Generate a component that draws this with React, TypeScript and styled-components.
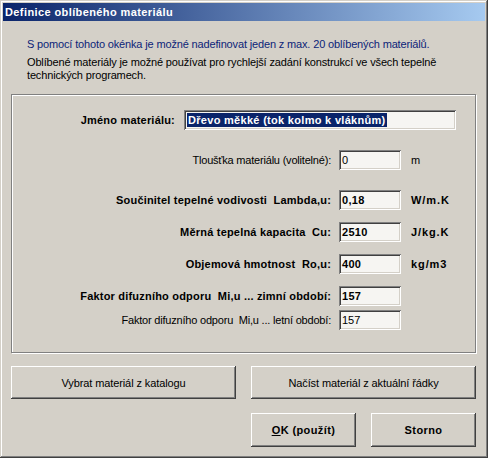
import React from "react";
import styled, { createGlobalStyle } from "styled-components";

const Global = createGlobalStyle`
  html, body { margin: 0; padding: 0; background: #d4d0c8; }
  body { font-family: "Liberation Sans", Arial, sans-serif; font-size: 11px; color: #000; letter-spacing: -0.15px; }
`;

const Window = styled.div`
  width: 488px;
  height: 458px;
  box-sizing: border-box;
  padding: 3px;
  background: #d4d0c8;
  box-shadow: inset -1px -1px #404040, inset 1px 1px #d4d0c8, inset -2px -2px #808080, inset 2px 2px #ffffff;
  display: flex;
  flex-direction: column;
`;

const TitleBar = styled.div`
  height: 18px;
  background: linear-gradient(90deg, #0a246a, #a6caf0);
  color: #fff;
  font-weight: bold;
  font-size: 11px;
  letter-spacing: 0.4px;
  line-height: 18px;
  padding-left: 2px;
  white-space: nowrap;
`;

const Body = styled.div`
  padding: 17px 9px 0 8px;
  display: flex;
  flex-direction: column;
`;

const Intro = styled.div`
  padding-left: 16px;
`;

const IntroLine = styled.p<{ $accent?: boolean; $gap?: number }>`
  margin: 0;
  margin-top: ${(p) => p.$gap ?? 0}px;
  line-height: 13px;
  color: ${(p) => (p.$accent ? "#0c2478" : "#000")};
`;

const GroupBox = styled.div`
  margin-top: 12px;
  height: 259px;
  box-sizing: border-box;
  border: 1px solid #808080;
  box-shadow: inset 1px 1px #ffffff, 1px 1px #ffffff;
  padding-top: 15px;
  display: flex;
  flex-direction: column;
`;

const NameRow = styled.div`
  display: flex;
  align-items: center;
  height: 20px;
`;

const NameLabel = styled.div`
  width: 163px;
  text-align: right;
  font-weight: bold;
  letter-spacing: 0.2px;
  white-space: pre;
  margin-right: 9px;
`;

const FieldRow = styled.div<{ $gap: number }>`
  display: grid;
  grid-template-columns: 319px 62px 1fr;
  column-gap: 8px;
  align-items: center;
  height: 20px;
  margin-top: ${(p) => p.$gap}px;
`;

const Label = styled.div<{ $bold?: boolean }>`
  text-align: right;
  white-space: pre;
  font-weight: ${(p) => (p.$bold ? "bold" : "normal")};
  letter-spacing: ${(p) => (p.$bold ? "0.2px" : "-0.2px")};
`;

const Field = styled.div<{ $bold?: boolean; $width?: number }>`
  box-sizing: border-box;
  height: 20px;
  width: ${(p) => (p.$width ? `${p.$width}px` : "auto")};
  background: #f6f5f2;
  box-shadow: inset 1px 1px #808080, inset -1px -1px #ffffff, inset 2px 2px #404040, inset -2px -2px #d4d0c8;
  padding-left: 3px;
  line-height: 20px;
  font-weight: ${(p) => (p.$bold ? "bold" : "normal")};
  letter-spacing: ${(p) => (p.$bold ? "0.3px" : "0")};
  white-space: nowrap;
  overflow: hidden;
`;

const Selected = styled.span`
  background: #0a246a;
  color: #fff;
  padding: 1px 1px;
`;

const Unit = styled.div<{ $bold?: boolean }>`
  padding-left: 2px;
  font-weight: ${(p) => (p.$bold ? "bold" : "normal")};
  letter-spacing: ${(p) => (p.$bold ? "0.9px" : "0")};
`;

const ButtonRow = styled.div`
  margin-top: 13px;
  display: grid;
  grid-template-columns: 225px 225px;
  column-gap: 15px;
`;

const ActionRow = styled.div`
  margin-top: 14px;
  display: flex;
  justify-content: flex-end;
  gap: 15px;
`;

const Button = styled.button<{ $bold?: boolean; $h: number; $w?: number }>`
  font-family: "Liberation Sans", Arial, sans-serif;
  font-size: 11px;
  font-weight: ${(p) => (p.$bold ? "bold" : "normal")};
  letter-spacing: ${(p) => (p.$bold ? "0.4px" : "-0.1px")};
  color: #000;
  height: ${(p) => p.$h}px;
  width: ${(p) => (p.$w ? `${p.$w}px` : "auto")};
  background: #d4d0c8;
  border: none;
  padding: 0;
  box-shadow: inset -1px -1px #404040, inset 1px 1px #ffffff, inset -2px -2px #808080, inset 2px 2px #d4d0c8;
  white-space: pre;
`;

const fields = [
  { label: "Tloušťka materiálu (volitelné):", value: "0", unit: "m", bold: false, gap: 20 },
  { label: "Součinitel tepelné vodivosti  Lambda,u:", value: "0,18", unit: "W/m.K", bold: true, gap: 20 },
  { label: "Měrná tepelná kapacita  Cu:", value: "2510", unit: "J/kg.K", bold: true, gap: 12 },
  { label: "Objemová hmotnost  Ro,u:", value: "400", unit: "kg/m3", bold: true, gap: 12 },
  { label: "Faktor difuzního odporu  Mi,u ... zimní období:", value: "157", unit: "", bold: true, gap: 12 },
  { label: "Faktor difuzního odporu  Mi,u ... letní období:", value: "157", unit: "", bold: false, gap: 4 },
];

export default function App() {
  return (
    <>
      <Global />
      <Window>
        <TitleBar>Definice oblíbeného materiálu</TitleBar>
        <Body>
          <Intro>
            <IntroLine $accent>S pomocí tohoto okénka je možné nadefinovat jeden z max. 20 oblíbených materiálů.</IntroLine>
            <IntroLine $gap={5}>
              Oblíbené materiály je možné používat pro rychlejší zadání konstrukcí ve všech tepelně
            </IntroLine>
            <IntroLine>technických programech.</IntroLine>
          </Intro>
          <GroupBox>
            <NameRow>
              <NameLabel>Jméno materiálu:</NameLabel>
              <Field $bold $width={272}>
                <Selected>Dřevo měkké (tok kolmo k vláknům)</Selected>
              </Field>
            </NameRow>
            {fields.map((f) => (
              <FieldRow key={f.label} $gap={f.gap}>
                <Label $bold={f.bold}>{f.label}</Label>
                <Field $bold={f.bold}>{f.value}</Field>
                <Unit $bold={f.unit !== "m"}>{f.unit}</Unit>
              </FieldRow>
            ))}
          </GroupBox>
          <ButtonRow>
            <Button $h={33}>Vybrat materiál z katalogu</Button>
            <Button $h={33}>Načíst materiál z aktuální řádky</Button>
          </ButtonRow>
          <ActionRow>
            <Button $bold $h={34} $w={105}>
              <u>O</u>K (použít)
            </Button>
            <Button $bold $h={34} $w={105}>
              Storno
            </Button>
          </ActionRow>
        </Body>
      </Window>
    </>
  );
}
